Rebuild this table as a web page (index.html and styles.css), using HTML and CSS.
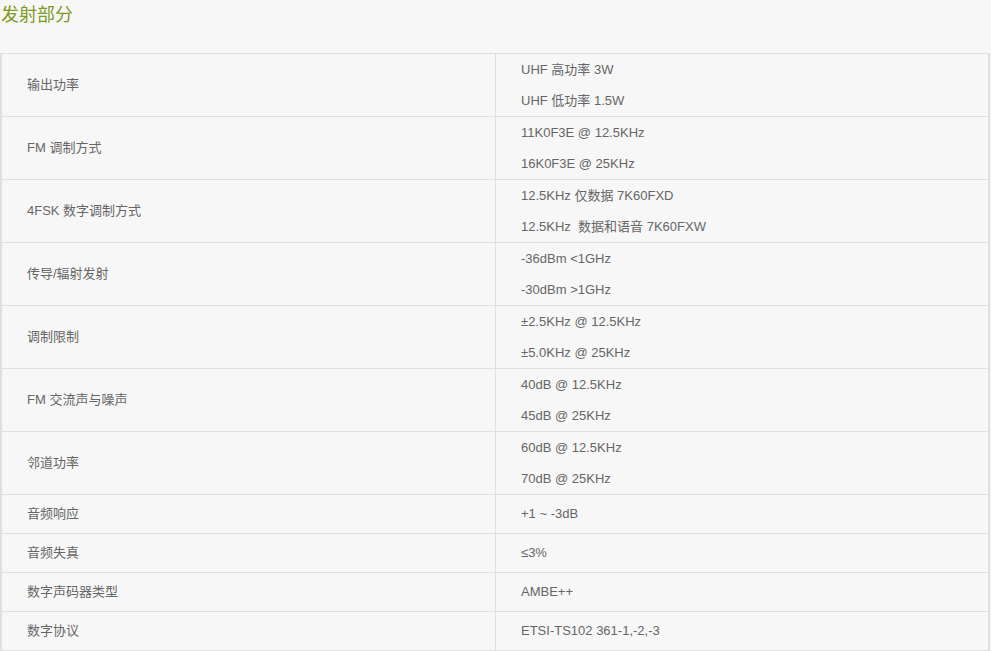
FILE: index.html
```html
<!DOCTYPE html>
<html lang="zh-CN">
<head>
<meta charset="utf-8">
<title>发射部分</title>
<link rel="stylesheet" href="styles.css">
</head>
<body>
<h2 class="title">发射部分</h2>
<table class="spec">
<tbody>
<tr class="multi"><td class="k">输出功率</td><td class="v"><div class="line">UHF 高功率 3W</div><div class="line">UHF 低功率 1.5W</div></td></tr>
<tr class="multi"><td class="k">FM 调制方式</td><td class="v"><div class="line">11K0F3E @ 12.5KHz</div><div class="line">16K0F3E @ 25KHz</div></td></tr>
<tr class="multi"><td class="k">4FSK 数字调制方式</td><td class="v"><div class="line">12.5KHz 仅数据 7K60FXD</div><div class="line">12.5KHz&nbsp; 数据和语音 7K60FXW</div></td></tr>
<tr class="multi"><td class="k">传导/辐射发射</td><td class="v"><div class="line">-36dBm &lt;1GHz</div><div class="line">-30dBm &gt;1GHz</div></td></tr>
<tr class="multi"><td class="k">调制限制</td><td class="v"><div class="line">±2.5KHz @ 12.5KHz</div><div class="line">±5.0KHz @ 25KHz</div></td></tr>
<tr class="multi"><td class="k">FM 交流声与噪声</td><td class="v"><div class="line">40dB @ 12.5KHz</div><div class="line">45dB @ 25KHz</div></td></tr>
<tr class="multi"><td class="k">邻道功率</td><td class="v"><div class="line">60dB @ 12.5KHz</div><div class="line">70dB @ 25KHz</div></td></tr>
<tr class="single"><td class="k">音频响应</td><td class="v">+1 ~ -3dB</td></tr>
<tr class="single"><td class="k">音频失真</td><td class="v">≤3%</td></tr>
<tr class="single"><td class="k">数字声码器类型</td><td class="v">AMBE++</td></tr>
<tr class="single"><td class="k">数字协议</td><td class="v">ETSI-TS102 361-1,-2,-3</td></tr>
</tbody>
</table>
</body>
</html>
```
FILE: styles.css
```css
html, body {
  margin: 0;
  padding: 0;
  background: #f7f7f7;
}
body {
  font-family: "Liberation Sans", Arial, "Noto Sans CJK SC", sans-serif;
  font-size: 13px;
  color: #666;
}
.title {
  margin: 0;
  padding: 0 0 23px 1px;
  font-size: 18px;
  line-height: 30px;
  font-weight: normal;
  color: #7f9a1e;
}
.spec {
  border-collapse: collapse;
  width: 990px;
  table-layout: fixed;
  border-top: 1px solid #e0e0e0;
  border-left: 2px solid #e0e0e0;
  border-right: 2px solid #e0e0e0;
  border-bottom: 2px solid #e0e0e0;
}
.spec td {
  border: 1px solid #e0e0e0;
  padding: 0 0 0 25px;
  vertical-align: middle;
  line-height: 16px;
}
.spec td.k {
  width: 468px;
}
.spec tr.single td {
  height: 38px;
}
.spec tr.multi td {
  height: 62px;
}
.line {
  height: 31px;
  line-height: 31px;
}
```
